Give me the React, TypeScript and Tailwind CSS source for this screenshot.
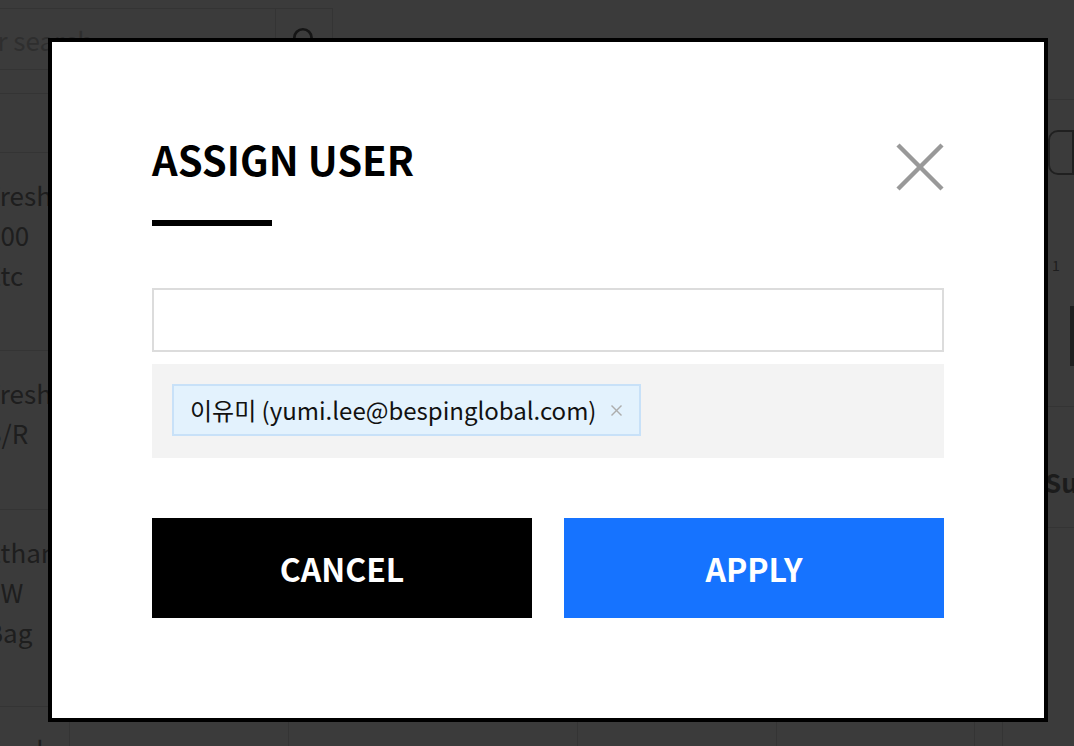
import React from 'react';
import { Search } from 'lucide-react';

const font = "font-['Noto_Sans_CJK_KR','Noto_Sans',sans-serif]";

const rows = [
  { lines: ['Fresh', '500', 'Etc'], h: 'h-[198px]' },
  { lines: ['Fresh', 'S/R'], h: 'h-[159px]' },
  { lines: ['Ethanol', '5W', 'Bag'], h: 'h-[197px]' },
  { lines: ['Fresh'], h: 'h-[60px]' },
];

const cols = ['w-[219px]', 'w-[289px]', 'w-[199px]', 'w-[198px]', 'w-[28px]'];

function BackgroundPage() {
  return (
    <div className="flex h-full w-full flex-col bg-white text-[#828282]">
      <div className="flex h-[93px] shrink-0 items-start pt-2">
        <div className="-ml-[20px] flex h-[62px] w-[353px] border border-[#dedede]">
          <div className="flex flex-1 items-center pl-[2px] text-[26px] text-[#c8c8c8]">er search</div>
          <div className="flex w-[57px] items-center justify-center border-l border-[#dedede] text-[#5a5a5a]">
            <Search size={26} strokeWidth={2.5} />
          </div>
        </div>
      </div>
      <div className="h-[59px] shrink-0 border-t border-[#dedede]" />
      {rows.map((r, i) => (
        <div key={i} className={`flex shrink-0 border-t border-[#dedede] ${r.h}`}>
          <div className="-ml-[14px] w-[84px] shrink-0 overflow-hidden border-r border-[#e2e2e2] pt-[22px] text-[26px] leading-[40px]">
            {r.lines.map((l) => (
              <div key={l} className="whitespace-nowrap">{l}</div>
            ))}
          </div>
          {cols.map((c, j) => (
            <div key={j} className={`shrink-0 border-r border-[#e2e2e2] ${c}`} />
          ))}
          <div className="flex-1" />
        </div>
      ))}
    </div>
  );
}

function RightEdge() {
  return (
    <div className="absolute right-0 top-0 flex h-full w-[26px] flex-col bg-white text-[#828282]">
      <div className="h-[100px] shrink-0 border-b border-[#dedede]" />
      <div className="mt-[30px] h-[45px] shrink-0 rounded-l-[10px] border-2 border-[#8a8a8a]" />
      <div className="mt-[80px] pl-[4px] text-[14px]">1</div>
      <div className="mt-[30px] ml-[22px] h-[60px] shrink-0 border-l-4 border-[#8a8a8a]" />
      <div className="mt-[40px] h-[1px] shrink-0 bg-[#dedede]" />
      <div className="mt-[60px] -ml-[3px] text-[26px] font-semibold leading-[30px] text-[#7a7a7a]">Su</div>
      <div className="mt-[30px] h-[1px] shrink-0 bg-[#dedede]" />
    </div>
  );
}

function CloseIcon() {
  return (
    <svg width="48" height="48" viewBox="0 0 48 48" fill="none">
      <line x1="2" y1="2" x2="46" y2="46" stroke="#999999" strokeWidth="4.5" />
      <line x1="46" y1="2" x2="2" y2="46" stroke="#999999" strokeWidth="4.5" />
    </svg>
  );
}

export default function App() {
  return (
    <div className={`relative h-[746px] w-[1074px] overflow-hidden ${font}`}>
      <BackgroundPage />
      <RightEdge />
      <div className="absolute inset-0 bg-black/[0.77] pl-[48px] pt-[38px]">
        <div className="flex h-[684px] w-[1000px] flex-col border-4 border-black bg-white px-[100px] pt-[100px]">
          <div className="flex items-start justify-between">
            <div>
              <h2 className="-mt-[3px] text-[40px] font-bold leading-[40px] text-black">ASSIGN USER</h2>
              <div className="mt-[41px] h-[6px] w-[120px] bg-black" />
            </div>
            <button className="mt-[1px]">
              <CloseIcon />
            </button>
          </div>
          <input className="mt-[62px] h-[64px] w-full border-2 border-[#dcdcdc] bg-white px-4 text-[22px] outline-none" />
          <div className="mt-3 h-[94px] bg-[#f3f3f3] p-5">
            <span className="inline-flex h-[52px] items-center gap-[15px] border-2 border-[#c8e1f8] bg-[#e3f2fd] pl-[16px] pr-[17px] text-[24px] text-[#111]">
              <span>이유미 (yumi.lee@bespinglobal.com)</span>
              <svg width="11" height="11" viewBox="0 0 11 11">
                <line x1="0.5" y1="0.5" x2="10.5" y2="10.5" stroke="#adadad" strokeWidth="1.4" />
                <line x1="10.5" y1="0.5" x2="0.5" y2="10.5" stroke="#adadad" strokeWidth="1.4" />
              </svg>
            </span>
          </div>
          <div className="mt-[60px] flex gap-8">
            <button className="h-[100px] flex-1 bg-black text-[32px] font-bold text-white">CANCEL</button>
            <button className="h-[100px] flex-1 bg-[#1673ff] text-[32px] font-bold text-white">APPLY</button>
          </div>
        </div>
      </div>
    </div>
  );
}
